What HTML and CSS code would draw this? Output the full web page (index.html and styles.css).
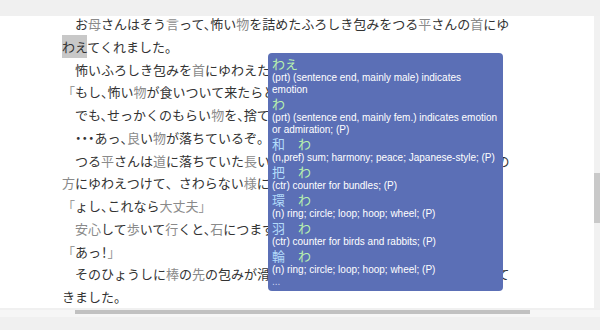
FILE: index.html
```html
<!DOCTYPE html>
<html lang="ja">
<head>
    <meta charset="UTF-8">
    <meta name="viewport" content="width=device-width, initial-scale=1.0">
    <title>つる平さん</title>
    <link rel="stylesheet" href="styles.css">
</head>
<body>
    <div class="topbar"></div>
    <div class="view">
        <div class="page">
            <div class="story">
                <p>　お<span class="k">母</span>さんはそう<span class="k">言</span>って、怖い<span class="k">物</span>を詰めたふろしき包みをつる<span class="k">平</span>さんの<span class="k">首</span>にゆ<span class="hl">わえ</span>てくれました。</p>
                <p>　怖いふろしき包みを<span class="k">首</span>にゆわえたつる<span class="k">平</span>さんは、そっと<span class="k">歩</span>き出しました。</p>
                <p><span class="q">「</span>もし、怖い<span class="k">物</span>が食いついて来たらどうしよう<span class="q">」</span></p>
                <p>　でも、せっかくのもらい<span class="k">物</span>を、捨てるわけにもいきません。</p>
                <p>　・・・あっ、<span class="k">良</span>い<span class="k">物</span>が落ちているぞ。</p>
                <p>　つる<span class="k">平</span>さんは<span class="k">道</span>に落ちていた<span class="k">長</span>い<span class="k">棒</span>を拾って来て、ふろしき包みを<span class="k">棒</span>の<span class="k">先</span>の<span class="k">方</span>にゆわえつけて<span class="fw">、</span>さわらない<span class="k">様</span>にして肩にかつぎました。</p>
                <p><span class="q">「</span>ょし、これなら<span class="k">大丈夫</span><span class="q">」</span></p>
                <p>　<span class="k">安心</span>して<span class="k">歩</span>いて<span class="k">行</span>くと、<span class="k">石</span>につまずいてしまいました。</p>
                <p><span class="q">「</span>あっ！<span class="q">」</span></p>
                <p>　そのひょうしに<span class="k">棒</span>の<span class="k">先</span>の包みが滑り落ちて、つる<span class="k">平</span>さんの顔の<span class="k">方</span>に近づいてきました。</p>
            </div>

            <div class="popup">
                <div class="entry"><span class="kana">わえ</span></div>
                <div class="def">(prt) (sentence end, mainly male) indicates emotion</div>
                <div class="entry"><span class="kana">わ</span></div>
                <div class="def">(prt) (sentence end, mainly fem.) indicates emotion or admiration; (P)</div>
                <div class="entry"><span class="kanji">和</span><span class="kana">わ</span></div>
                <div class="def">(n,pref) sum; harmony; peace; Japanese-style; (P)</div>
                <div class="entry"><span class="kanji">把</span><span class="kana">わ</span></div>
                <div class="def">(ctr) counter for bundles; (P)</div>
                <div class="entry"><span class="kanji">環</span><span class="kana">わ</span></div>
                <div class="def">(n) ring; circle; loop; hoop; wheel; (P)</div>
                <div class="entry"><span class="kanji">羽</span><span class="kana">わ</span></div>
                <div class="def">(ctr) counter for birds and rabbits; (P)</div>
                <div class="entry"><span class="kanji">輪</span><span class="kana">わ</span></div>
                <div class="def">(n) ring; circle; loop; hoop; wheel; (P)</div>
                <div class="def more">...</div>
            </div>
        </div>
        <div class="vbar"><div class="vthumb"></div></div>
    </div>
    <div class="hbar"><div class="hthumb"></div></div>
</body>
</html>
```

FILE: styles.css
```css
*{
    margin: 0;
    padding: 0;
}
body{
    background: #f0f0f0;
    font-family: "Noto Sans CJK JP", sans-serif;
}
.topbar{
    height: 16px;
}
.view{
    display: flex;
    height: 292px;
    background: #fff;
}
.page{
    flex: 1;
    position: relative;
    overflow: hidden;
}
.story{
    width: 455px;
    margin: -3px 0 0 62px;
    font-size: 13px;
    line-height: 22.75px;
    color: #333;
    /* half-width 、・ like the reader does */
    font-feature-settings: "halt";
}
.k{
    color: #8a8a8a;
}
.q{
    color: #9a9a9a;
    font-feature-settings: normal;
}
.fw{
    font-feature-settings: normal;
}
.hl{
    background: #c8c8c8;
    padding: 2px 0;
}
.vbar{
    width: 6px;
    background: #f1f1f1;
}
.vthumb{
    height: 50px;
    margin-top: 157px;
    background: #c9c9c9;
}
.hbar{
    height: 7px;
    background: #f6f6f6;
}
.hthumb{
    width: 455px;
    height: 4px;
    margin: 2px 0 0 75px;
    background: #c1c1c1;
}

/* dictionary popup */
.popup{
    position: absolute;
    left: 268px;
    top: 37px;
    width: 226px;
    padding: 3px 5px 3px 4px;
    background: #5b6fb6;
    border-radius: 4px;
}
.entry{
    font-size: 13px;
    line-height: 16px;
}
.kanji{
    color: #b3dcfb;
    margin-right: 13px;
}
.kana{
    color: #b8f2ae;
}
.def{
    font: 10px/12px "Liberation Sans", Arial, sans-serif;
    color: #fff;
}
.more{
    color: #cfd6f0;
}
```
